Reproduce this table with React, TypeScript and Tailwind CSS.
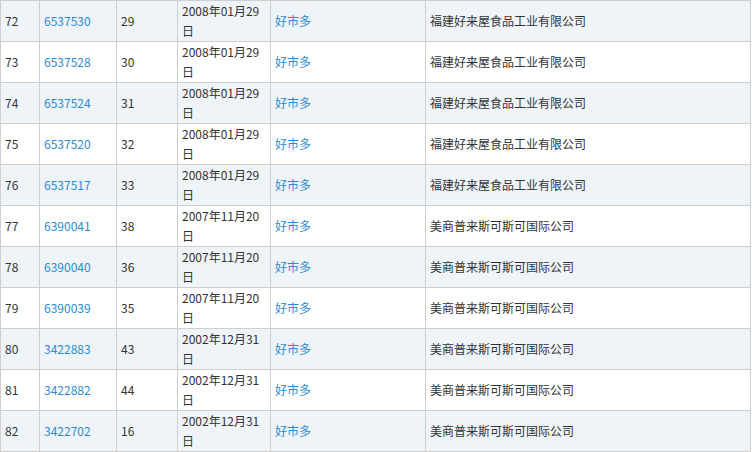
import React from "react";

type Row = [string, string, string, string, string, string];

const A = "福建好来屋食品工业有限公司";
const B = "美商普来斯可斯可国际公司";

const rows: Row[] = [
  ["72", "6537530", "29", "2008年01月29", "好市多", A],
  ["73", "6537528", "30", "2008年01月29", "好市多", A],
  ["74", "6537524", "31", "2008年01月29", "好市多", A],
  ["75", "6537520", "32", "2008年01月29", "好市多", A],
  ["76", "6537517", "33", "2008年01月29", "好市多", A],
  ["77", "6390041", "38", "2007年11月20", "好市多", B],
  ["78", "6390040", "36", "2007年11月20", "好市多", B],
  ["79", "6390039", "35", "2007年11月20", "好市多", B],
  ["80", "3422883", "43", "2002年12月31", "好市多", B],
  ["81", "3422882", "44", "2002年12月31", "好市多", B],
  ["82", "3422702", "16", "2002年12月31", "好市多", B],
];

export default function App() {
  return (
    <div
      className="w-[752px] h-[452px] bg-white overflow-hidden text-[12px] leading-[20px] text-[#333333]"
      style={{ fontFamily: '"Microsoft YaHei", "Noto Sans CJK SC", sans-serif' }}
    >
      <div className="flex flex-col w-[751px] border-t border-[#cfcfcf]">
        {rows.map((r, i) => (
          <div
            key={r[0]}
            className={`flex h-[41px] border-b border-[#cfcfcf] ${i % 2 === 0 ? "bg-[#eff4f9]" : "bg-white"}`}
          >
            <div className="w-[40px] shrink-0 border-l border-r border-[#cfcfcf] pl-1 flex items-center">
              {r[0]}
            </div>
            <div className="w-[77px] shrink-0 border-r border-[#cfcfcf] pl-1 flex items-center text-[#2b8bd6]">
              {r[1]}
            </div>
            <div className="w-[61px] shrink-0 border-r border-[#cfcfcf] pl-1 flex items-center">
              {r[2]}
            </div>
            <div className="w-[93px] shrink-0 border-r border-[#cfcfcf] pl-1 flex flex-col justify-center whitespace-nowrap">
              <span>{r[3]}</span>
              <span>日</span>
            </div>
            <div className="w-[155px] shrink-0 border-r border-[#cfcfcf] pl-1 flex items-center text-[#2b8bd6]">
              {r[4]}
            </div>
            <div className="w-[325px] shrink-0 border-r border-[#cfcfcf] pl-1 flex items-center">
              {r[5]}
            </div>
          </div>
        ))}
      </div>
    </div>
  );
}
